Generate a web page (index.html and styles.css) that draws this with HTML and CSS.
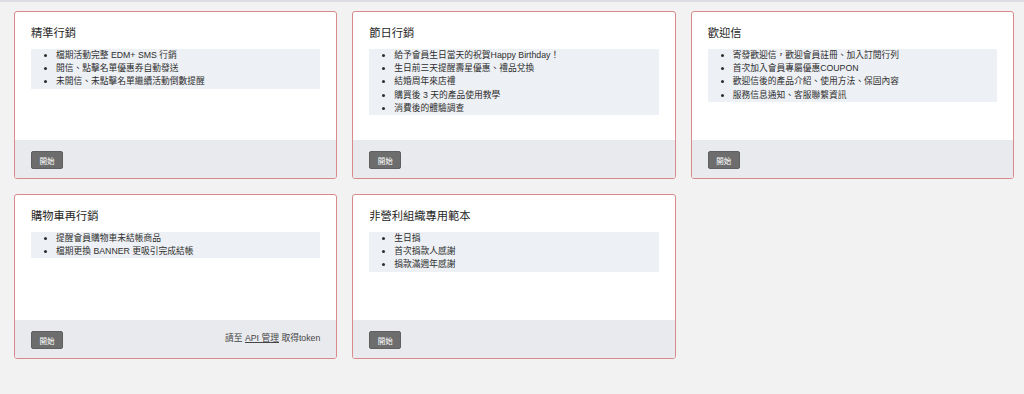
FILE: index.html
```html
<!DOCTYPE html>
<html lang="zh-Hant">
<head>
    <meta charset="UTF-8">
    <meta name="viewport" content="width=device-width, initial-scale=1.0">
    <title>範本</title>
    <link rel="stylesheet" href="styles.css">
</head>
<body>
    <div class="topbar"></div>
    <div class="templates">
        <div class="card">
            <div class="card-body">
                <h3 class="card-title">精準行銷</h3>
                <ul class="points">
                    <li>檔期活動完整 EDM+ SMS 行銷</li>
                    <li>開信、點擊名單優惠券自動發送</li>
                    <li>未開信、未點擊名單繼續活動倒數提醒</li>
                </ul>
            </div>
            <div class="card-footer">
                <button class="start">開始</button>
            </div>
        </div>

        <div class="card">
            <div class="card-body">
                <h3 class="card-title">節日行銷</h3>
                <ul class="points">
                    <li>給予會員生日當天的祝賀Happy Birthday！</li>
                    <li>生日前三天提醒壽星優惠、禮品兌換</li>
                    <li>結婚周年來店禮</li>
                    <li>購買後 3 天的產品使用教學</li>
                    <li>消費後的體驗調查</li>
                </ul>
            </div>
            <div class="card-footer">
                <button class="start">開始</button>
            </div>
        </div>

        <div class="card">
            <div class="card-body">
                <h3 class="card-title">歡迎信</h3>
                <ul class="points">
                    <li>寄發歡迎信，歡迎會員註冊、加入訂閱行列</li>
                    <li>首次加入會員專屬優惠COUPON</li>
                    <li>歡迎信後的產品介紹、使用方法、保固內容</li>
                    <li>服務信息通知、客服聯繫資訊</li>
                </ul>
            </div>
            <div class="card-footer">
                <button class="start">開始</button>
            </div>
        </div>

        <div class="card">
            <div class="card-body">
                <h3 class="card-title">購物車再行銷</h3>
                <ul class="points">
                    <li>提醒會員購物車未結帳商品</li>
                    <li>檔期更換 BANNER 更吸引完成結帳</li>
                </ul>
            </div>
            <div class="card-footer">
                <button class="start">開始</button>
                <span class="note">請至 <a href="#">API 管理</a> 取得token</span>
            </div>
        </div>

        <div class="card">
            <div class="card-body">
                <h3 class="card-title">非營利組織專用範本</h3>
                <ul class="points">
                    <li>生日捐</li>
                    <li>首次捐款人感謝</li>
                    <li>捐款滿週年感謝</li>
                </ul>
            </div>
            <div class="card-footer">
                <button class="start">開始</button>
            </div>
        </div>
    </div>
</body>
</html>
```

FILE: styles.css
```css
body {
    margin: 0;
    background-color: #f2f2f2;
    font-family: "Liberation Sans", "Noto Sans CJK TC", sans-serif;
    color: #333;
}
.topbar {
    height: 2px;
    background-color: #dcdde2;
}
.templates {
    display: grid;
    grid-template-columns: repeat(3, 1fr);
    gap: 15px;
    padding: 9px 10px 0 14px;
}
.card {
    display: flex;
    flex-direction: column;
    background-color: #fff;
    border: 1px solid #d9898b;
    border-radius: 3px;
    overflow: hidden;
}
.card-body {
    flex: 1;
    min-height: 125px;
    box-sizing: border-box;
    padding: 12px 16px 25px;
}
.card-title {
    margin: 0 0 7px;
    font-size: 11.25px;
    line-height: 18px;
    font-weight: normal;
    color: #1f1f1f;
}
.points {
    margin: 0;
    padding: 0 0 0 25px;
    background-color: #edf0f4;
    font-size: 8.75px;
    line-height: 13.2px;
    color: #2e2e2e;
}
.card-footer {
    display: flex;
    justify-content: space-between;
    align-items: center;
    padding: 11px 16px 9px;
    background-color: #e9eaee;
}
.start {
    width: 32px;
    height: 18px;
    padding: 0;
    border: 1px solid #5f5f5f;
    border-radius: 2px;
    background-color: #6d6d6d;
    color: #fff;
    font-family: inherit;
    font-size: 7.5px;
    cursor: pointer;
}
.note {
    margin-bottom: 5px;
    font-size: 8.75px;
    color: #444;
}
.note a {
    color: #444;
}
```
